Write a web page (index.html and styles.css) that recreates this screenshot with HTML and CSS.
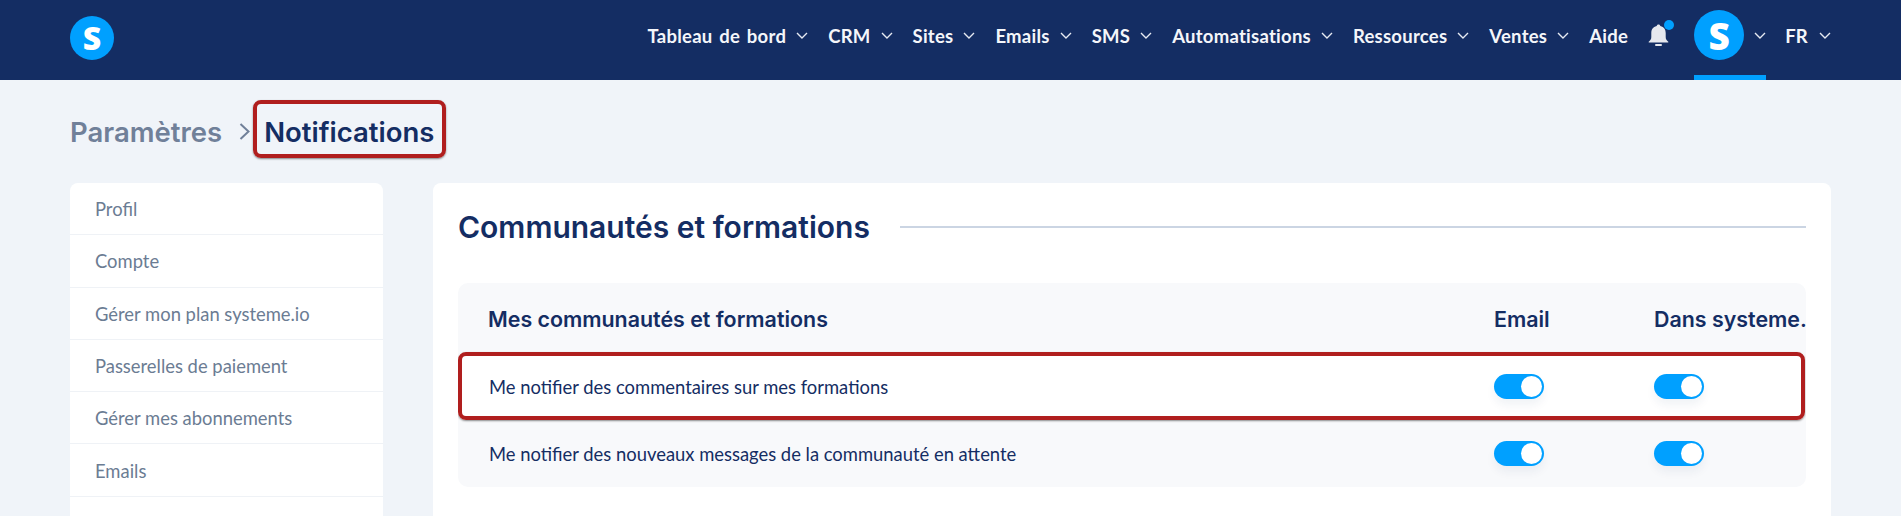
FILE: index.html
```html
<!DOCTYPE html>
<html lang="fr">
<head>
<meta charset="utf-8">
<title>Notifications</title>
<link rel="stylesheet" href="styles.css">
</head>
<body>
<header class="topbar">
  <div class="logo">S</div>
  <nav class="nav">
    <a class="nav-item">Tableau de bord<svg class="chev" viewBox="0 0 12 7"><path d="M1 1l5 5 5-5"/></svg></a>
    <a class="nav-item">CRM<svg class="chev" viewBox="0 0 12 7"><path d="M1 1l5 5 5-5"/></svg></a>
    <a class="nav-item">Sites<svg class="chev" viewBox="0 0 12 7"><path d="M1 1l5 5 5-5"/></svg></a>
    <a class="nav-item">Emails<svg class="chev" viewBox="0 0 12 7"><path d="M1 1l5 5 5-5"/></svg></a>
    <a class="nav-item">SMS<svg class="chev" viewBox="0 0 12 7"><path d="M1 1l5 5 5-5"/></svg></a>
    <a class="nav-item">Automatisations<svg class="chev" viewBox="0 0 12 7"><path d="M1 1l5 5 5-5"/></svg></a>
    <a class="nav-item">Ressources<svg class="chev" viewBox="0 0 12 7"><path d="M1 1l5 5 5-5"/></svg></a>
    <a class="nav-item">Ventes<svg class="chev" viewBox="0 0 12 7"><path d="M1 1l5 5 5-5"/></svg></a>
    <a class="nav-item">Aide</a>
    <div class="bell">
      <svg viewBox="0 0 21 22" width="21" height="22"><path d="M10.500 0.500c1 0 1.700 .7 1.800 1.600 3.800 .8 5.400 3.500 5.400 7v4c0 2 .8 3.300 2.300 4.300.6 .4 .4 1.100-.3 1.100H1.300c-.7 0-.9-.7-.3-1.100 1.500-1 2.300-2.300 2.300-4.300v-4c0-3.500 1.600-6.200 5.400-7 .1-.9.800-1.600 1.800-1.600z"/><rect x="7" y="20" width="7" height="2" rx="1"/></svg>
      <span class="bell-dot"></span>
    </div>
    <div class="account">
      <div class="avatar">S</div>
      <svg class="chev" viewBox="0 0 12 7"><path d="M1 1l5 5 5-5"/></svg>
    </div>
    <a class="nav-item lang">FR<svg class="chev" viewBox="0 0 12 7"><path d="M1 1l5 5 5-5"/></svg></a>
  </nav>
</header>

<main class="page">
  <div class="crumbs">
    <span class="crumb-parent">Paramètres</span>
    <svg class="crumb-sep" viewBox="0 0 11 17"><path d="M1.500 1l8 7.500-8 7.500"/></svg>
    <span class="crumb-current">Notifications</span>
  </div>
  <div class="columns">
    <aside class="sidebar">
      <a class="side-item">Profil</a>
      <a class="side-item">Compte</a>
      <a class="side-item">Gérer mon plan systeme.io</a>
      <a class="side-item">Passerelles de paiement</a>
      <a class="side-item">Gérer mes abonnements</a>
      <a class="side-item">Emails</a>
    </aside>
    <section class="card">
      <div class="title-row">
        <h1 class="title">Communautés et formations</h1>
        <span class="title-rule"></span>
      </div>
      <div class="panel">
        <div class="row row-head">
          <div class="cell-label">Mes communautés et formations</div>
          <div class="cell-col">Email</div>
          <div class="cell-col">Dans systeme.io</div>
        </div>
        <div class="row row-body row-marked">
          <div class="cell-label">Me notifier des commentaires sur mes formations</div>
          <div class="cell-col"><span class="toggle"></span></div>
          <div class="cell-col"><span class="toggle"></span></div>
        </div>
        <div class="row row-body">
          <div class="cell-label">Me notifier des nouveaux messages de la communauté en attente</div>
          <div class="cell-col"><span class="toggle"></span></div>
          <div class="cell-col"><span class="toggle"></span></div>
        </div>
      </div>
    </section>
  </div>
</main>
</body>
</html>
```
FILE: styles.css
```css
* { box-sizing: border-box; }
html, body { margin: 0; height: 516px; overflow: hidden; }
body { background: #f0f4f9; color: #142d63; font-family: "Lato", "Liberation Sans", sans-serif; }

.topbar { height: 80px; background: #142d63; display: flex; align-items: center; justify-content: space-between; padding: 0 70px; }
.logo, .avatar { border-radius: 50%; background: #00a0ff; color: #fff; display: flex; align-items: center; justify-content: center; font-family: "Open Sans", sans-serif; font-weight: 800; }
.logo { width: 44px; height: 44px; font-size: 32px; margin-top: -5px; }
.nav { display: flex; align-items: center; height: 80px; }
.nav-item { display: flex; align-items: center; color: #f4f6fa; font-size: 18.500px; font-weight: 700; letter-spacing: .25px; word-spacing: 2px; margin-right: 20px; margin-top: -9px; white-space: nowrap; }
.chev { width: 12px; height: 7px; margin-left: 10px; fill: none; stroke: #e6eaf2; stroke-width: 1.400; }
.nav-item.lang { margin: -9px 0 0 19px; }
.nav-item.lang .chev { margin-left: 11px; }
.bell { position: relative; width: 21px; height: 22px; margin-right: 25px; margin-top: -10px; }
.bell svg { display: block; fill: #e6e8ee; }
.bell-dot { position: absolute; right: -5px; top: -4px; width: 10px; height: 10px; border-radius: 50%; background: #00a0ff; }
.account { display: flex; align-items: flex-start; height: 80px; padding-top: 10px; border-bottom: 5px solid #00a0ff; }
.avatar { width: 50px; height: 50px; font-size: 37px; }
.account .chev { margin-top: 22px; margin-left: 10px; }

.page { padding: 20px 70px 0; }
.crumbs { display: flex; align-items: center; height: 58px; font-family: "Inter", sans-serif; font-size: 27.500px; font-weight: 600; }
.crumb-parent { color: #708099; padding-top: 5px; }
.crumb-sep { width: 11px; height: 17px; margin: 5px 3px 0 17px; fill: none; stroke: #708099; stroke-width: 2; }
.crumb-current { height: 58px; display: flex; align-items: center; padding: 5px 8px 0 7px; border: 4px solid #b01e1e; border-radius: 8px; box-shadow: 0 1px 2px rgba(0,0,0,.45); }

.columns { display: flex; align-items: flex-start; gap: 50px; margin-top: 25px; }
.sidebar { width: 313px; height: 400px; flex: none; background: #fff; border-radius: 8px; display: flex; flex-direction: column; }
.side-item { height: 52.300px; display: flex; align-items: center; padding: 1px 25px 0; color: #6b7c93; font-size: 18.400px; border-bottom: 1px solid #eff2f6; }

.card { flex: 1; min-width: 0; height: 400px; background: #fff; border-radius: 8px; padding: 0 25px; }
.title-row { display: flex; align-items: center; gap: 30px; height: 88px; }
.title { margin: 0; font-family: "Inter", sans-serif; font-size: 30px; font-weight: 600; white-space: nowrap; }
.title-rule { flex: 1; height: 2px; background: #cbd5e3; }

.panel { margin-top: 12px; height: 204px; background: #f8f9fb; border-radius: 10px; overflow: hidden; }
.row { display: grid; grid-template-columns: 1fr 160px 152px; align-items: center; padding-left: 30px; }
.row-head { height: 69px; padding-top: 2px; font-family: "Inter", sans-serif; font-size: 21.400px; font-weight: 600; white-space: nowrap; }
.row-body { height: 67px; font-size: 18.400px; }
.row-body .cell-label { padding: 1px 0 0 1px; }
.row-marked { position: relative; height: 68px; background: #fff; border-radius: 8px; }
.row-marked::after { content: ""; position: absolute; inset: 0 1px 0 0; border: 4px solid #b01e1e; border-radius: 8px; box-shadow: 0 1px 2px rgba(0,0,0,.45); }
.cell-label { min-width: 0; }
.toggle { display: block; position: relative; width: 50px; height: 25px; border-radius: 13px; background: #00a0ff; box-shadow: 0 6px 10px rgba(20,45,99,.06); }
.toggle::after { content: ""; position: absolute; right: 2px; top: 2px; width: 21px; height: 21px; border-radius: 50%; background: #fff; }
```
